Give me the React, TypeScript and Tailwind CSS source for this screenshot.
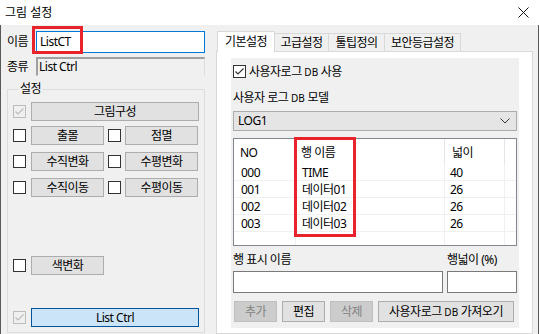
import React from "react";

const Check = ({ checked = false, disabled = false }: { checked?: boolean; disabled?: boolean }) => (
  <div
    className={`w-[13px] h-[13px] shrink-0 border flex items-center justify-center ${
      disabled ? "border-[#bcbcbc] bg-[#f0f0f0]" : "border-[#333333] bg-white"
    }`}
  >
    {checked && (
      <svg width="11" height="11" viewBox="0 0 11 11">
        <polyline
          points="1.5,5.5 4,8 9.5,2.5"
          fill="none"
          stroke={disabled ? "#bcbcbc" : "#333333"}
          strokeWidth="1.2"
        />
      </svg>
    )}
  </div>
);

const Btn = ({
  className,
  children,
  disabled = false,
}: {
  className: string;
  children: React.ReactNode;
  disabled?: boolean;
}) => (
  <div
    className={`flex items-center justify-center border ${
      disabled ? "bg-[#cccccc] border-[#bfbfbf] text-[#838383]" : "bg-[#e1e1e1] border-[#adadad]"
    } ${className}`}
  >
    {children}
  </div>
);

const rows = [
  { no: "000", name: "TIME", w: "40" },
  { no: "001", name: "데이터01", w: "26" },
  { no: "002", name: "데이터02", w: "26" },
  { no: "003", name: "데이터03", w: "26" },
];

const Db = () => <span className="text-[10px] tracking-normal">DB</span>;

export default function App() {
  return (
    <div className="w-[539px] h-[334px] overflow-hidden bg-[#f0f0f0] text-black text-[12px] tracking-[-0.5px] font-['Noto_Sans','Noto_Sans_CJK_KR',sans-serif] flex flex-col">
      {/* title bar */}
      <div className="h-[25px] shrink-0 bg-white flex items-center justify-between pl-[5px] pr-[10px]">
        <span className="tracking-normal">그림 설정</span>
        <svg width="11" height="11" viewBox="0 0 11 11">
          <path d="M0.5 0.5 L10.5 10.5 M10.5 0.5 L0.5 10.5" stroke="#111" strokeWidth="1" />
        </svg>
      </div>

      <div className="flex-1 flex border-x border-[#595959]">
        {/* left column */}
        <div className="w-[215px] shrink-0 flex flex-col pl-[6px]">
          <div className="mt-[6px] h-[22px] flex items-center">
            <span className="w-[29px]">이름</span>
            <div className="relative w-[169px] h-[22px] border border-[#0078d7] bg-white pl-[3px] flex items-center">
              ListCT
              <div className="absolute left-[-5px] top-[-6px] w-[51px] h-[28px] border-[3px] border-[#e8232b]" />
            </div>
          </div>
          <div className="mt-[4px] h-[19px] flex items-center">
            <span className="w-[29px]">종류</span>
            <div className="w-[169px] h-[19px] border-t-2 border-l-2 border-[#a0a0a0] border-r border-b border-r-[#dcdcdc] border-b-[#f0f0f0] pl-[1px] flex items-center">
              List Ctrl
            </div>
          </div>

          <fieldset className="mt-[5px] w-[198px] h-[252px] border border-[#dcdcdc] pl-[5px] flex flex-col">
            <legend className="ml-[5px] px-[2px] leading-4">설정</legend>
            <div className="mt-[5px] h-[19px] flex items-center gap-[5px]">
              <Check checked disabled />
              <Btn className="w-[168px] h-[19px]">그림구성</Btn>
            </div>
            <div className="mt-[5px] h-[19px] flex items-center">
              <Check />
              <Btn className="ml-[5px] w-[73px] h-[19px]">출몰</Btn>
              <div className="ml-[4px]">
                <Check />
              </div>
              <Btn className="ml-[4px] w-[73px] h-[19px]">점멸</Btn>
            </div>
            <div className="mt-[7px] h-[19px] flex items-center">
              <Check />
              <Btn className="ml-[5px] w-[73px] h-[19px]">수직변화</Btn>
              <div className="ml-[4px]">
                <Check />
              </div>
              <Btn className="ml-[4px] w-[73px] h-[19px]">수평변화</Btn>
            </div>
            <div className="mt-[7px] h-[19px] flex items-center">
              <Check />
              <Btn className="ml-[5px] w-[73px] h-[19px]">수직이동</Btn>
              <div className="ml-[4px]">
                <Check />
              </div>
              <Btn className="ml-[4px] w-[73px] h-[19px]">수평이동</Btn>
            </div>
            <div className="mt-[59px] h-[19px] flex items-center">
              <Check />
              <Btn className="ml-[5px] w-[73px] h-[19px]">색변화</Btn>
            </div>
            <div className="mt-[33px] h-[19px] flex items-center gap-[5px]">
              <Check checked disabled />
              <div className="w-[168px] h-[19px] flex items-center justify-center border border-[#005499] bg-[#cce4f7]">
                List Ctrl
              </div>
            </div>
          </fieldset>
        </div>

        {/* tab control */}
        <div className="w-[317px] shrink-0 flex flex-col mt-[6px]">
          <div className="h-[20px] flex items-end pl-[1px]">
            <div className="relative z-10 h-[21px] mb-[-1px] w-[58px] bg-white border-l border-t border-r border-[#d9d9d9] flex items-start justify-center pt-[1px]">
              기본설정
            </div>
            <div className="h-[18px] w-[54px] border-t border-r border-[#d9d9d9] flex items-center justify-center">
              고급설정
            </div>
            <div className="h-[18px] w-[56px] border-t border-r border-[#d9d9d9] flex items-center justify-center">
              툴팁정의
            </div>
            <div className="h-[18px] w-[76px] border-t border-r border-[#d9d9d9] flex items-center justify-center">
              보안등급설정
            </div>
          </div>
          <div className="flex-1 border border-[#d9d9d9] bg-white pl-[14px] pt-[6px]">
            <div className="w-[288px] h-[270px] bg-[#f0f0f0] flex flex-col pl-[2px]">
              <div className="mt-[7px] h-[13px] flex items-center gap-[3px]">
                <Check checked />
                <span>
                  사용자로그 <Db /> 사용
                </span>
              </div>
              <div className="mt-[12px] h-[16px] flex items-center">
                <span>
                  사용자 로그 <Db /> 모델
                </span>
              </div>
              <div className="mt-[5px] w-[284px] h-[20px] border border-[#acacac] bg-[#e5e5e5] flex items-center justify-between pl-[4px] pr-[6px]">
                <span>LOG1</span>
                <svg width="10" height="6" viewBox="0 0 10 6">
                  <polyline points="0.5,0.5 5,5 9.5,0.5" fill="none" stroke="#333" strokeWidth="1" />
                </svg>
              </div>

              <div className="relative mt-[7px] w-[284px] h-[108px] border border-[#828790] bg-white flex flex-col">
                <div className="h-[25px] grid grid-cols-[62px_149px_60px_1fr]">
                  <div className="border-r border-[#e5e5e5] pl-[6px] flex items-center pt-[2px]">NO</div>
                  <div className="border-r border-[#e5e5e5] pl-[5px] flex items-center pt-[2px]">행 이름</div>
                  <div className="border-r border-[#e5e5e5] pl-[7px] flex items-center pt-[2px]">넓이</div>
                  <div />
                </div>
                {rows.map((r) => (
                  <div key={r.no} className="h-[17px] grid grid-cols-[62px_149px_60px_1fr] border-b border-[#f0f0f0]">
                    <div className="border-r border-[#f0f0f0] pl-[7px] flex items-center">{r.no}</div>
                    <div className="border-r border-[#f0f0f0] pl-[6px] flex items-center">{r.name}</div>
                    <div className="border-r border-[#f0f0f0] pl-[5px] flex items-center">{r.w}</div>
                    <div />
                  </div>
                ))}
                <div className="flex-1 grid grid-cols-[62px_149px_60px_1fr]">
                  <div className="border-r border-[#f0f0f0]" />
                  <div className="border-r border-[#f0f0f0]" />
                  <div className="border-r border-[#f0f0f0]" />
                  <div />
                </div>
                <div className="absolute left-[60px] top-[-2px] w-[62px] h-[100px] border-[3px] border-[#e8232b]" />
              </div>

              <div className="mt-[6px] h-[16px] flex items-center">
                <span className="w-[214px]">행 표시 이름</span>
                <span>행넓이 (%)</span>
              </div>
              <div className="mt-[3px] flex gap-[4px]">
                <div className="w-[210px] h-[22px] border border-[#7a7a7a] bg-white" />
                <div className="w-[70px] h-[22px] border border-[#7a7a7a] bg-white" />
              </div>
              <div className="mt-[8px] ml-[1px] flex gap-[5px]">
                <Btn disabled className="w-[43px] h-[21px]">추가</Btn>
                <Btn className="w-[43px] h-[21px]">편집</Btn>
                <Btn disabled className="w-[43px] h-[21px]">삭제</Btn>
                <Btn className="w-[136px] h-[21px]">
                  <span>
                    사용자로그 <Db /> 가져오기
                  </span>
                </Btn>
              </div>
            </div>
          </div>
        </div>
      </div>
    </div>
  );
}
